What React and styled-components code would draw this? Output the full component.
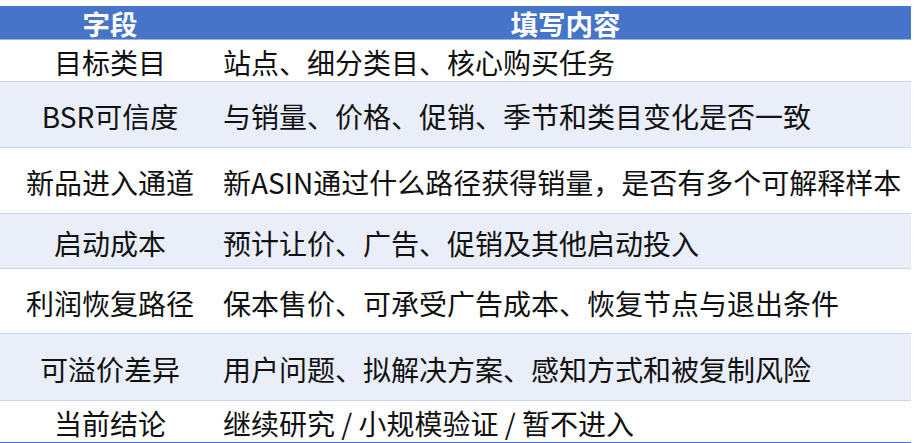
import React from "react";
import styled, { createGlobalStyle } from "styled-components";

const Global = createGlobalStyle`
  html, body { margin: 0; padding: 0; background: #ffffff; }
  body { font-family: "Noto Sans CJK SC", "Noto Sans", sans-serif; }
`;

const Table = styled.div`
  margin-top: 6px;
  width: 911px;
  display: flex;
  flex-direction: column;
  border-bottom: 2px solid #4a72c4;
`;

const Row = styled.div`
  display: grid;
  grid-template-columns: 220px 1fr;
  align-items: center;
  height: ${(p) => p.$h}px;
  box-sizing: border-box;
  background: ${(p) => (p.$alt ? "#e9eef8" : "#ffffff")};
  border-bottom: ${(p) => (p.$last ? "none" : "1px solid #c8d5ee")};
`;

const HeadRow = styled(Row)`
  background: #4674c9;
  border-bottom: 1px solid #9db5e6;
`;

const HeadCell = styled.div`
  color: #ffffff;
  font-weight: 700;
  font-size: 27.5px;
  line-height: 1;
  text-align: center;
  padding-top: 3px;
`;

const FieldCell = styled.div`
  color: #111111;
  font-size: 28px;
  line-height: 1;
  text-align: center;
  padding-top: 3px;
`;

const ContentCell = styled.div`
  color: #111111;
  font-size: 28px;
  line-height: 1;
  padding-left: 3px;
  padding-top: 3px;
  white-space: nowrap;
`;

const rows = [
  { f: "目标类目", c: "站点、细分类目、核心购买任务", h: 42 },
  { f: "BSR可信度", c: "与销量、价格、促销、季节和类目变化是否一致", h: 66 },
  { f: "新品进入通道", c: "新ASIN通过什么路径获得销量，是否有多个可解释样本", h: 66 },
  { f: "启动成本", c: "预计让价、广告、促销及其他启动投入", h: 55 },
  { f: "利润恢复路径", c: "保本售价、可承受广告成本、恢复节点与退出条件", h: 65 },
  { f: "可溢价差异", c: "用户问题、拟解决方案、感知方式和被复制风险", h: 67 },
  { f: "当前结论", c: "继续研究 / 小规模验证 / 暂不进入", h: 41 },
];

export default function App() {
  return (
    <>
      <Global />
      <Table>
        <HeadRow $h={34}>
          <HeadCell>字段</HeadCell>
          <HeadCell>填写内容</HeadCell>
        </HeadRow>
        {rows.map((r, i) => (
          <Row key={r.f} $h={r.h} $alt={i % 2 === 1} $last={i === rows.length - 1}>
            <FieldCell>{r.f}</FieldCell>
            <ContentCell>{r.c}</ContentCell>
          </Row>
        ))}
      </Table>
    </>
  );
}
